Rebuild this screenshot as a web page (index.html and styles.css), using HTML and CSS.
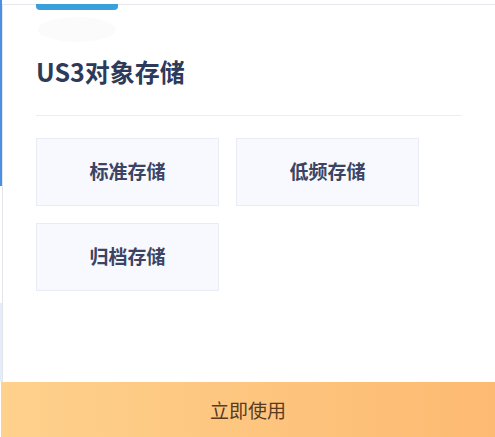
FILE: index.html
```html
<!DOCTYPE html>
<html lang="zh">
<head>
<meta charset="utf-8">
<title>US3对象存储</title>
<link rel="stylesheet" href="styles.css">
</head>
<body>
<div class="page">
  <div class="main">
    <div class="strip"></div>
    <div class="panel">
      <div class="tab"></div>
      <div class="blob"></div>
      <h1 class="title">US3对象存储</h1>
      <div class="divider"></div>
      <div class="grid">
        <div class="item">标准存储</div>
        <div class="item">低频存储</div>
        <div class="item">归档存储</div>
      </div>
    </div>
  </div>
  <div class="cta">立即使用</div>
</div>
</body>
</html>
```

FILE: styles.css
```css
html, body {
  margin: 0;
  padding: 0;
  background: #ffffff;
}

body {
  font-family: "Noto Sans CJK SC", "Noto Sans", sans-serif;
}

.page {
  width: 495px;
  height: 437px;
  display: flex;
  flex-direction: column;
  overflow: hidden;
}

.main {
  flex: 1;
  display: flex;
  min-height: 0;
}

.strip {
  width: 2px;
  flex: none;
  background: linear-gradient(to bottom,
    #4a90e2 0, #4a90e2 186px,
    #ffffff 186px, #ffffff 303px,
    #e4edf8 303px, #e4edf8 100%);
}

.panel {
  flex: 1;
  margin-top: 4px;
  border-top: 1px solid #e6e8ee;
  border-left: 1px solid #e2e5eb;
  padding-left: 33px;
  display: flex;
  flex-direction: column;
}

.tab {
  width: 82px;
  height: 6px;
  margin-top: -1px;
  background: #3aa0dc;
  border-radius: 0 0 4px 4px;
}

.blob {
  width: 78px;
  height: 25px;
  margin-top: 7px;
  margin-left: 2px;
  background: #fbfbfc;
  border-radius: 50%;
}

.title {
  margin: 13px 0 0;
  font-size: 25px;
  line-height: 32px;
  font-weight: 700;
  color: #2e3a59;
}

.divider {
  margin-top: 28px;
  width: 426px;
  height: 1px;
  background: #eceef2;
}

.grid {
  margin-top: 22px;
  display: grid;
  grid-template-columns: 183px 183px;
  grid-auto-rows: 68px;
  column-gap: 17px;
  row-gap: 17px;
}

.item {
  box-sizing: border-box;
  border: 1px solid #e8ecf5;
  background: #f8f9fe;
  display: flex;
  align-items: center;
  justify-content: center;
  padding-bottom: 3px;
  font-size: 19px;
  font-weight: 700;
  color: #3b4462;
}

.cta {
  height: 55px;
  margin-left: 1px;
  flex: none;
  background: linear-gradient(to right, #fed18c, #fdba72);
  display: flex;
  align-items: center;
  justify-content: center;
  font-size: 19px;
  color: #5a3b1f;
}
```
